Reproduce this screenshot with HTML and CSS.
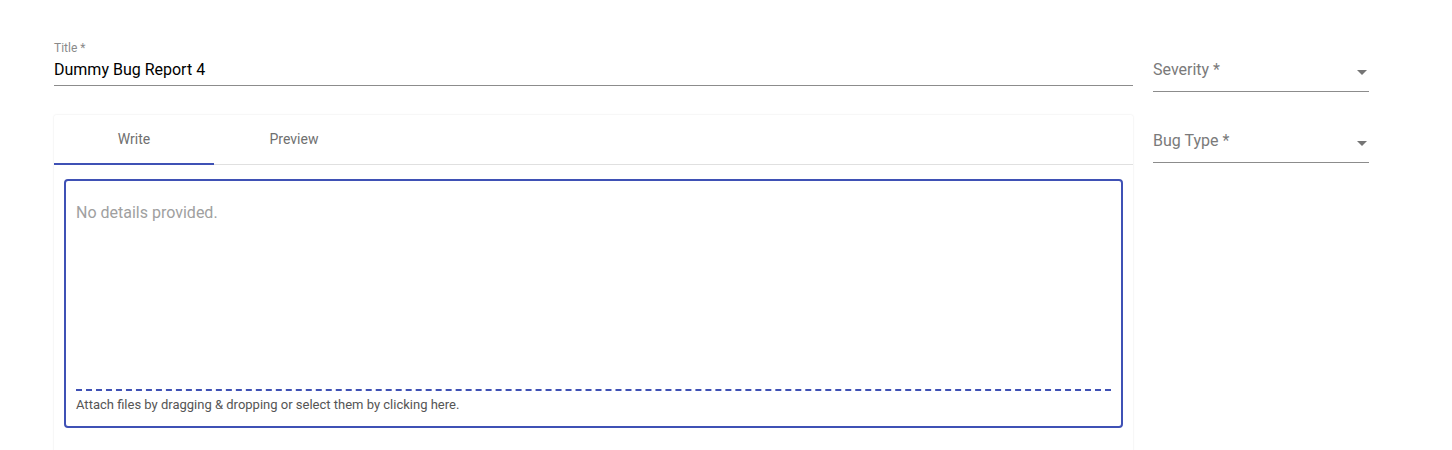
FILE: index.html
```html
<!DOCTYPE html>
<html>
<head>
<meta charset="utf-8">
<link rel="stylesheet" href="styles.css">
</head>
<body>
<div class="page">
  <div class="main">
    <div class="title-field">
      <label class="small-label">Title *</label>
      <div class="title-input">Dummy Bug Report 4</div>
    </div>
    <div class="card">
      <div class="tabs">
        <div class="tab active">Write</div>
        <div class="tab">Preview</div>
      </div>
      <div class="card-body">
        <div class="editor">
          <div class="placeholder">No details provided.</div>
          <div class="attach">Attach files by dragging &amp; dropping or select them by clicking here.</div>
        </div>
      </div>
    </div>
  </div>
  <div class="side">
    <div class="select first">
      <span class="select-label">Severity *</span>
      <span class="arrow"></span>
    </div>
    <div class="select">
      <span class="select-label">Bug Type *</span>
      <span class="arrow"></span>
    </div>
  </div>
</div>
</body>
</html>
```

FILE: styles.css
```css
html, body {
  margin: 0;
  padding: 0;
  background: #ffffff;
  font-family: Roboto, "Liberation Sans", Arial, sans-serif;
}
.page {
  display: flex;
  padding: 40px 0 0 54px;
  gap: 20px;
  height: 450px;
  box-sizing: border-box;
  overflow: hidden;
}
.main {
  width: 1079px;
  display: flex;
  flex-direction: column;
  flex-shrink: 0;
}
.title-field {
  display: flex;
  flex-direction: column;
  border-bottom: 1px solid #8c8c8c;
  height: 46px;
  box-sizing: border-box;
  flex-shrink: 0;
  padding-top: 1px;
}
.small-label {
  font-size: 12px;
  line-height: 14px;
  color: #8a8a8a;
}
.title-input {
  font-size: 16px;
  line-height: 20px;
  color: #000000;
  margin-top: 5px;
}
.card {
  margin-top: 29px;
  height: 340px;
  flex-shrink: 0;
  background: #fff;
  box-shadow: 0 0 2px rgba(0,0,0,0.12);
  border-radius: 2px;
  display: flex;
  flex-direction: column;
}
.tabs {
  display: flex;
  height: 49px;
  border-bottom: 1px solid #e0e0e0;
}
.tab {
  width: 160px;
  display: flex;
  align-items: center;
  justify-content: center;
  font-size: 14px;
  color: #6f6f6f;
  box-sizing: border-box;
  padding-bottom: 1px;
  font-weight: 400;
}
.tab.active {
  border-bottom: 2px solid #3f51b5;
  margin-bottom: -1px;
}
.card-body {
  padding: 14px 10px 0 10px;
}
.editor {
  height: 249px;
  border: 2px solid #3f51b5;
  border-radius: 4px;
  box-sizing: border-box;
  padding: 22px 10px 0 10px;
  display: flex;
  flex-direction: column;
}
.placeholder {
  font-size: 16px;
  color: #a0a0a0;
  line-height: 19px;
  flex: 1;
}
.attach {
  border-top: 2px dashed #3f51b5;
  padding-top: 6px;
  font-size: 13px;
  line-height: 15px;
  color: #555;
  height: 37px;
  box-sizing: border-box;
}
.side {
  width: 216px;
  display: flex;
  flex-direction: column;
  flex-shrink: 0;
}
.select {
  height: 52px;
  border-bottom: 1px solid #8c8c8c;
  display: flex;
  align-items: center;
  justify-content: space-between;
  box-sizing: border-box;
  padding-top: 8px;
  margin-top: 19px;
}
.select.first {
  margin-top: 0;
}
.select-label {
  font-size: 16px;
  color: #7a7a7a;
}
.arrow {
  width: 0;
  height: 0;
  border-left: 5px solid transparent;
  border-right: 5px solid transparent;
  border-top: 5px solid #757575;
  margin-right: 2px;
  margin-top: 5px;
}
```
